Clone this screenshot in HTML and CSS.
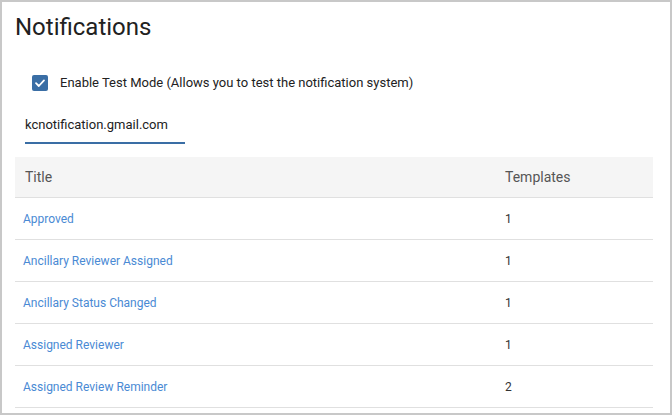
FILE: index.html
```html
<!DOCTYPE html>
<html>
<head>
<meta charset="utf-8">
<link rel="stylesheet" href="styles.css">
</head>
<body>
<div class="panel">
  <h1 class="title">Notifications</h1>
  <label class="check-row">
    <span class="checkbox">
      <svg width="12" height="12" viewBox="0 0 12 12"><path d="M2 6.2 L4.8 9 L10 3.4" fill="none" stroke="#fff" stroke-width="1.8" stroke-linecap="round" stroke-linejoin="round"/></svg>
    </span>
    <span class="check-label">Enable Test Mode (Allows you to test the notification system)</span>
  </label>
  <div class="field">kcnotification.gmail.com</div>
  <div class="table">
    <div class="row head">
      <div class="cell c-title">Title</div>
      <div class="cell c-num">Templates</div>
    </div>
    <div class="row">
      <div class="cell c-title"><a class="link">Approved</a></div>
      <div class="cell c-num">1</div>
    </div>
    <div class="row">
      <div class="cell c-title"><a class="link">Ancillary Reviewer Assigned</a></div>
      <div class="cell c-num">1</div>
    </div>
    <div class="row">
      <div class="cell c-title"><a class="link">Ancillary Status Changed</a></div>
      <div class="cell c-num">1</div>
    </div>
    <div class="row">
      <div class="cell c-title"><a class="link">Assigned Reviewer</a></div>
      <div class="cell c-num">1</div>
    </div>
    <div class="row">
      <div class="cell c-title"><a class="link">Assigned Review Reminder</a></div>
      <div class="cell c-num">2</div>
    </div>
  </div>
</div>
</body>
</html>
```
FILE: styles.css
```css
html, body {
  margin: 0;
  padding: 0;
  background: #fff;
}
body {
  font-family: Roboto, "Liberation Sans", Arial, sans-serif;
  color: #333;
}
.panel {
  box-sizing: border-box;
  width: 672px;
  height: 415px;
  border: 2px solid #c8c8c8;
  padding: 0 17px 0 13px;
  overflow: hidden;
}
.title {
  margin: 11px 0 0;
  font-size: 24px;
  line-height: 28px;
  font-weight: 400;
  color: #212121;
}
.check-row {
  display: flex;
  align-items: center;
  gap: 12px;
  margin: 33px 0 0 17px;
  height: 17px;
}
.checkbox {
  width: 16px;
  height: 16px;
  border-radius: 2px;
  background: #3a6ea5;
  display: flex;
  align-items: center;
  justify-content: center;
}
.check-label {
  font-size: 13px;
  line-height: 17px;
  color: #222;
}
.field {
  box-sizing: border-box;
  width: 160px;
  margin: 25px 0 0 10px;
  font-size: 13px;
  line-height: 17px;
  padding-bottom: 9px;
  color: #222;
  border-bottom: 2px solid #3a6ea5;
}
.table {
  margin-top: 13px;
}
.row {
  box-sizing: border-box;
  display: grid;
  grid-template-columns: 490px 1fr;
  align-items: center;
  height: 42px;
  font-size: 12px;
  line-height: 16px;
  border-bottom: 1px solid #e0e0e0;
}
.row.head {
  height: 41px;
  background: #f5f5f5;
  font-size: 14px;
  line-height: 18px;
  color: #555;
}
.cell {
  padding-left: 8px;
}
.head .c-title {
  padding-left: 10px;
}
.c-num {
  padding-left: 0;
  color: #333;
}
.head .c-num {
  color: #555;
}
.link {
  color: #4a8ad4;
  text-decoration: none;
}
```
